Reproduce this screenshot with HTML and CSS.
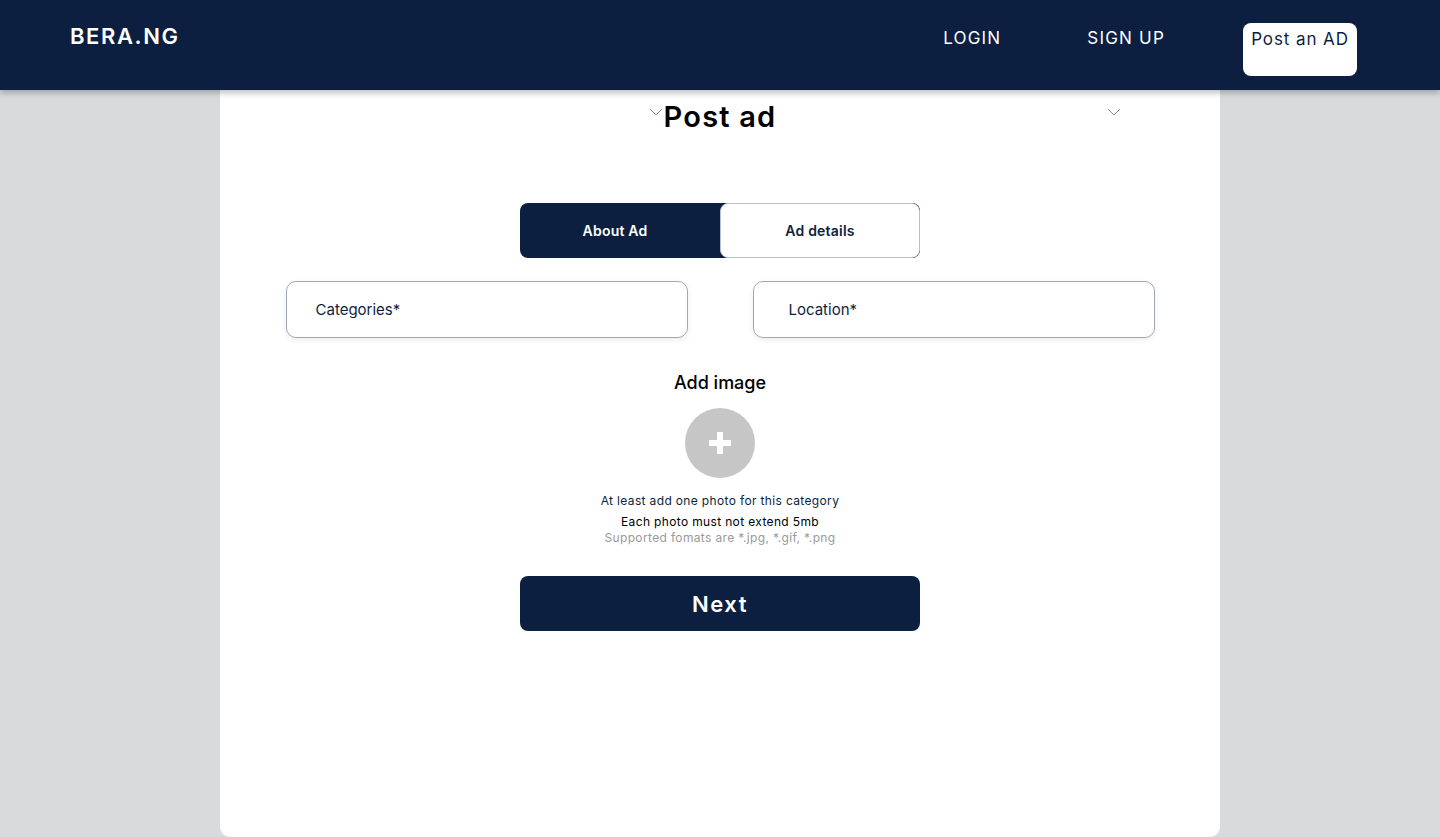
FILE: index.html
```html
<!DOCTYPE html>
<html lang="en">
<head>
<meta charset="utf-8">
<title>BERA.NG - Post ad</title>
<link rel="stylesheet" href="styles.css">
</head>
<body>
<header class="topbar">
  <div class="logo">BERA.NG</div>
  <nav class="nav">
    <a class="nav-link login" href="#">LOGIN</a>
    <a class="nav-link signup" href="#">SIGN UP</a>
    <a class="post-btn" href="#">Post an AD</a>
  </nav>
</header>
<main class="card">
  <div class="title-row">
    <div class="chev-cell left">
      <svg class="chev" width="14" height="8" viewBox="0 0 14 8"><path d="M1 1l6 6 6-6" fill="none" stroke="#8a8a8a" stroke-width="1"/></svg>
    </div>
    <h1 class="title">Post ad</h1>
    <div class="chev-cell right">
      <svg class="chev" width="14" height="8" viewBox="0 0 14 8"><path d="M1 1l6 6 6-6" fill="none" stroke="#8a8a8a" stroke-width="1"/></svg>
    </div>
  </div>

  <div class="tabs">
    <div class="tab active">About Ad</div>
    <div class="tab">Ad details</div>
  </div>

  <div class="fields">
    <div class="field cat">Categories*</div>
    <div class="field loc">Location*</div>
  </div>

  <div class="upload">
    <div class="upload-title">Add image</div>
    <div class="add-circle">
      <svg width="22" height="22" viewBox="0 0 22 22"><path d="M8 0h6v8h8v6h-8v8H8v-8H0V8h8z" fill="#ffffff"/></svg>
    </div>
    <p class="hint navy">At least add one photo for this category</p>
    <p class="hint dark">Each photo must not extend 5mb</p>
    <p class="hint grey">Supported fomats are *.jpg, *.gif, *.png</p>
  </div>

  <button class="next-btn">Next</button>
</main>
</body>
</html>
```

FILE: styles.css
```css
* { box-sizing: border-box; }
html, body { margin: 0; padding: 0; }
body {
  background: #d9dadc;
  font-family: "Inter", "Noto Sans", "Liberation Sans", sans-serif;
  height: 837px;
  overflow: hidden;
}
.topbar {
  position: relative;
  z-index: 2;
  height: 90px;
  background: #0c1f41;
  box-shadow: 0 3px 6px rgba(0,0,0,0.25);
  display: flex;
  align-items: flex-start;
  justify-content: space-between;
  padding: 0 83px 0 70px;
}
.logo {
  color: #fff;
  font-size: 22px;
  font-weight: 600;
  letter-spacing: 1.6px;
  margin-top: 23px;
}
.nav {
  display: flex;
  align-items: flex-start;
}
.nav-link {
  color: #fff;
  text-decoration: none;
  font-size: 17px;
  font-weight: 400;
  letter-spacing: 1.2px;
  margin-top: 28px;
}
.login { margin-right: 86px; }
.signup { margin-right: 78px; }
.post-btn {
  margin-top: 23px;
  width: 114px;
  height: 53px;
  background: #fff;
  border-radius: 8px;
  color: #0c1f41;
  text-decoration: none;
  font-size: 17px;
  letter-spacing: 0.9px;
  text-align: center;
  padding-top: 4px;
  line-height: 24px;
}
.card {
  width: 1000px;
  height: 747px;
  margin: 0 auto;
  background: #fff;
  border-radius: 0 0 10px 10px;
  display: flex;
  flex-direction: column;
  align-items: center;
  padding-top: 9px;
}
.title-row {
  width: 100%;
  display: grid;
  grid-template-columns: 1fr auto 1fr;
}
.chev-cell { display: flex; padding-top: 9px; }
.chev-cell.left { justify-content: flex-end; padding-right: 1px; }
.chev-cell.right { justify-content: flex-start; padding-left: 331px; }
.title {
  margin: 0;
  font-size: 29px;
  line-height: 36px;
  font-weight: 600;
  letter-spacing: 1.2px;
  color: #000;
}
.tabs {
  margin-top: 68px;
  width: 400px;
  height: 55px;
  display: flex;
  border-radius: 8px;
  overflow: hidden;
  background: #0c1f41;
}
.tab {
  flex: none;
  width: 200px;
  display: flex;
  align-items: center;
  justify-content: center;
  font-size: 14px;
  font-weight: 600;
  letter-spacing: 0.2px;
  color: #fff;
}
.tab.active { padding-right: 10px; }
.tab:not(.active) {
  background: #fff;
  color: #0c1f41;
  border: 1px solid #b8bfcc;
  border-radius: 8px;
}
.fields {
  margin-top: 23px;
  display: flex;
  gap: 65px;
}
.field {
  width: 402px;
  height: 57px;
  border: 1px solid #a0a8b8;
  border-radius: 10px;
  box-shadow: 0 2px 6px rgba(0,0,0,0.08);
  display: flex;
  align-items: center;
  font-size: 15px;
  color: #0c1f41;
}
.field.cat { padding-left: 29px; }
.field.loc { padding-left: 35px; }
.upload {
  margin-top: 33px;
  display: flex;
  flex-direction: column;
  align-items: center;
}
.upload-title {
  font-size: 18px;
  font-weight: 500;
  line-height: 24px;
  color: #000;
}
.add-circle {
  margin-top: 13px;
  width: 70px;
  height: 70px;
  border-radius: 50%;
  background: #c6c6c6;
  display: flex;
  align-items: center;
  justify-content: center;
}
.hint {
  margin: 0;
  font-size: 12px;
  line-height: 16px;
  letter-spacing: 0.35px;
}
.hint.navy { color: #0c1f41; margin-top: 15px; }
.hint.dark { color: #000; margin-top: 5px; }
.hint.grey { color: #9a9a9a; }
.next-btn {
  margin-top: 30px;
  width: 400px;
  height: 55px;
  border: none;
  border-radius: 8px;
  background: #0c1f41;
  color: #fff;
  font-family: inherit;
  font-size: 22px;
  font-weight: 600;
  letter-spacing: 1.5px;
}
```
